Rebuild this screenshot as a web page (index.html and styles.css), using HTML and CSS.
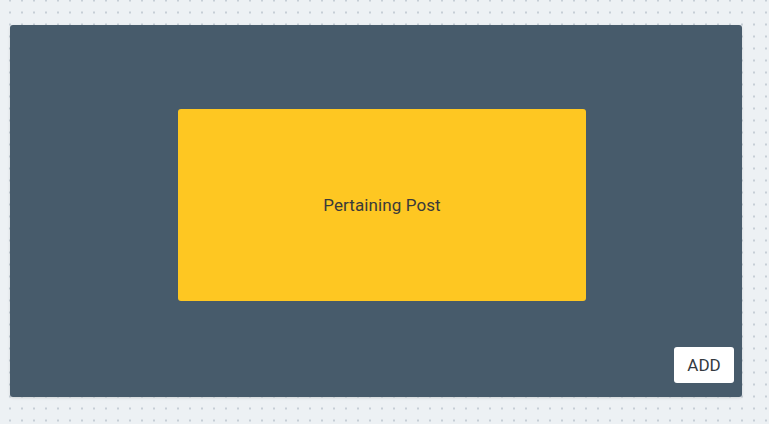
FILE: index.html
```html
<!DOCTYPE html>
<html>
<head>
<meta charset="utf-8">
<link rel="stylesheet" href="styles.css">
</head>
<body>
  <div class="canvas">
    <div class="panel">
      <div class="post">Pertaining Post</div>
      <button class="add">ADD</button>
    </div>
  </div>
</body>
</html>
```
FILE: styles.css
```css
html, body {
  margin: 0;
  padding: 0;
  height: 100%;
}
body {
  background-color: #edf1f4;
  background-image: radial-gradient(circle, #c6ced6 0.85px, transparent 1.1px);
  background-size: 12px 12px;
  background-position: 4px -5.5px;
  font-family: Roboto, "Liberation Sans", sans-serif;
}
.canvas {
  padding: 25px 0 0 10px;
}
.panel {
  width: 732px;
  height: 372px;
  box-sizing: border-box;
  background: #475b6b;
  border-radius: 3px;
  box-shadow: 0 1px 3px rgba(0, 0, 0, 0.12);
  display: flex;
  flex-direction: column;
  align-items: flex-start;
  padding: 84px 8px 14px 168px;
}
.post {
  width: 408px;
  height: 192px;
  background: #fec722;
  border-radius: 3px;
  display: flex;
  align-items: center;
  justify-content: center;
  font-size: 17px;
  letter-spacing: 0.1px;
  color: #3a3a3a;
}
.add {
  margin-top: auto;
  align-self: flex-end;
  width: 60px;
  height: 36px;
  background: #ffffff;
  border: none;
  border-radius: 3px;
  font-family: Roboto, "Liberation Sans", sans-serif;
  font-size: 17px;
  color: #333a40;
  padding: 0;
}
```
